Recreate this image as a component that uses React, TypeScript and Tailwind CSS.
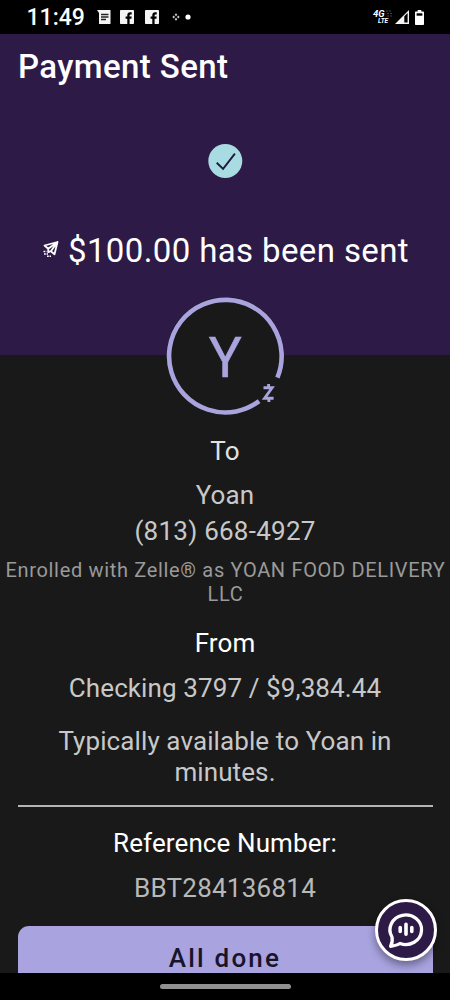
import React from 'react';

const FacebookIcon = () => (
  <svg className="size-[14px]" viewBox="0 0 14 14">
    <rect width="14" height="14" rx="0.8" fill="#f4f4f4" />
    <path d="M7.3 14V8.8H5.6V6.6h1.7V5.2c0-2 1-3 2.8-3h1.6v2.2h-1.1c-.8 0-1 .4-1 1.1v1.1h2.1l-.3 2.2H9.6V14z" fill="#000" />
  </svg>
);

const StatusBar = () => (
  <div className="flex h-[34px] shrink-0 items-center bg-black pl-[26.5px] pr-[26px] text-white">
    <span className="w-[70px] pt-[2px] text-[23px] leading-[34px] font-medium">11:49</span>
    <svg className="h-[14px] w-[14px]" viewBox="0 0 14 14">
      <path d="M0 0h13.5v14H2V3z" fill="#f4f4f4" />
      <path d="M4 4.5h7.5M4 7h7.5M4 9.5h5" stroke="#222" strokeWidth="1.3" />
    </svg>
    <div className="ml-[9.5px] flex gap-[11px]">
      <FacebookIcon />
      <FacebookIcon />
    </div>
    <svg className="ml-[12px] h-[8px] w-[20px]" viewBox="0 0 20 8">
      <path d="M5 .2 6.4 1.7 5 3.2 3.6 1.7zM5 4.8 6.4 6.3 5 7.8 3.6 6.3zM2.7 2.5 4.1 4 2.7 5.5 1.3 4zM7.3 2.5 8.7 4 7.3 5.5 5.9 4z" fill="#c4c4c4" />
      <circle cx="17" cy="4" r="2.6" fill="#fff" />
    </svg>
    <div className="ml-auto flex items-center">
      <div className="relative flex w-[20px] flex-col font-bold italic">
        <span className="text-[9.5px] leading-[8px]">4G</span>
        <span className="pl-[5px] text-[6.5px] leading-[7px]">LTE</span>
        <svg className="absolute top-0 right-0 h-[7px] w-[7px]" viewBox="0 0 7 7">
          <path d="M0 1h6M1 3.5h6M1 6h6" stroke="#444" strokeWidth="1.2" strokeDasharray="2 1" />
        </svg>
      </div>
      <svg className="ml-[2px] h-[14px] w-[14px]" viewBox="0 0 14 14">
        <path d="M14 0v14H0z" fill="#f4f4f4" />
        <path d="M9.3 6.2 12.6 3v9.6H9.3z" fill="#000" />
      </svg>
      <svg className="ml-[6px] h-[15px] w-[9px]" viewBox="0 0 9 15">
        <path d="M2.7 0h3.6v1.6h1.9q.8 0 .8.8v11.8q0 .8-.8.8H.8q-.8 0-.8-.8V2.4q0-.8.8-.8h1.9z" fill="#fff" />
        <path d="M1.6 3.3h5.8v2.4H1.6z" fill="#000" />
      </svg>
    </div>
  </div>
);

const Avatar = () => (
  <svg className="absolute top-[263px] left-[166px] size-[118px]" viewBox="0 0 118 118">
    <circle cx="59.3" cy="58.7" r="58.6" fill="#191919" />
    <path d="M93.1 104.2A56.3 56.3 0 1 1 111.4 80.6" fill="none" stroke="#a9a3de" strokeWidth="4.6" />
    <text x="59.3" y="80.2" textAnchor="middle" fontSize="55" fill="#a9a3de" stroke="#a9a3de" strokeWidth="0.5" fontFamily="Roboto, sans-serif">Y</text>
    <path d="M97.5 90.8h8.6L98.6 101.2h9M102.6 87v4M102.9 101v4" fill="none" stroke="#a9a3de" strokeWidth="2.9" />
  </svg>
);

const ChatButton = () => (
  <button className="absolute top-[899px] left-[375px] flex size-[62px] items-center justify-center rounded-full border-[3px] border-white bg-[#2e1a47] shadow-[0_4px_8px_rgba(0,0,0,0.4)]">
    <svg className="size-[40px]" viewBox="0 0 40 40" fill="none" stroke="#fff" strokeLinecap="round" strokeLinejoin="round">
      <path d="M6 27A15.8 14.8 0 1 1 14 33.5Q11 35.5 4.6 36.3 7 32 6 27z" strokeWidth="3.3" />
      <path d="M14.2 17.5v4M20 14.3v10M25.8 17.5v4" strokeWidth="3.6" />
    </svg>
  </button>
);

export default function App() {
  return (
    <div className="relative flex h-[1000px] w-[450px] flex-col overflow-hidden bg-[#191919] font-[Roboto,sans-serif]">
      <StatusBar />

      <header className="relative flex h-[321px] shrink-0 flex-col items-center bg-[#2e1a47] text-white">
        <h1 className="mt-[13px] self-start pl-[18px] text-[33px] leading-[40px] font-medium tracking-[0.4px]">Payment Sent</h1>
        <svg className="mt-[57px] size-[35px]" viewBox="0 0 35 35">
          <circle cx="17.3" cy="17" r="17" fill="#a8dce2" />
          <path d="m8.7 18.7 6.4 6.2L26.9 9.7" fill="none" stroke="#1f1a3c" strokeWidth="1.9" />
        </svg>
        <div className="mt-[53px] flex w-full items-center pl-[43px]">
          <svg className="mb-[4px] size-[16px] shrink-0" viewBox="0 0 16 16" fill="none" stroke="#fff">
            <path d="M14.5 1 1.5 4.5l3.7 3.2zM14.5 1l-3 12.3-3.6-3zM14.5 1 5.2 7.7v3.5l2.7-1z" strokeWidth="1.8" strokeLinejoin="round" />
            <path d="M.5 10.5h3M1 13h4M4 15.3h4" strokeWidth="1.6" strokeDasharray="1.8 .8" />
          </svg>
          <p className="ml-[9px] whitespace-nowrap text-[33px] leading-[38px] tracking-[0.38px]">$100.00 has been sent</p>
        </div>
        <Avatar />
      </header>

      <main className="flex h-[618px] shrink-0 flex-col items-center overflow-hidden text-center text-[26px] leading-[31px] tracking-[0.1px] text-[#c8c8c8]">
        <h2 className="mt-[81px] text-[#e2e2e2]">To</h2>
        <p className="mt-[13px]">Yoan</p>
        <p className="mt-[5px] tracking-[0.25px]">(813) 668-4927</p>
        <p className="mt-[11px] pl-px text-[20px] leading-[24px] tracking-[0.67px] whitespace-nowrap text-[#9a9a9a]">
          Enrolled with Zelle® as YOAN FOOD DELIVERY
          <br />
          LLC
        </p>
        <h2 className="mt-[22px] text-white">From</h2>
        <p className="mt-[14px]">Checking 3797 / $9,384.44</p>
        <p className="mt-[22px] w-[360px]">Typically available to Yoan in minutes.</p>
        <hr className="mt-[17px] h-[2px] w-[415px] shrink-0 border-0 bg-[#b4b4b4]" />
        <h2 className="mt-[21px] text-white">Reference Number:</h2>
        <p className="mt-[14px] tracking-[0.25px] text-[#b8b8b8]">BBT284136814</p>
        <button className="mt-[22px] h-[64px] w-[415px] shrink-0 rounded-[11px] bg-[#a9a3e0] font-medium tracking-[2.2px] text-[#17142b]">
          All done
        </button>
      </main>

      <nav className="flex h-[27px] shrink-0 justify-center bg-black pt-[11px]">
        <div className="h-[5px] w-[131px] rounded-full bg-[#919191]" />
      </nav>

      <ChatButton />
    </div>
  );
}
